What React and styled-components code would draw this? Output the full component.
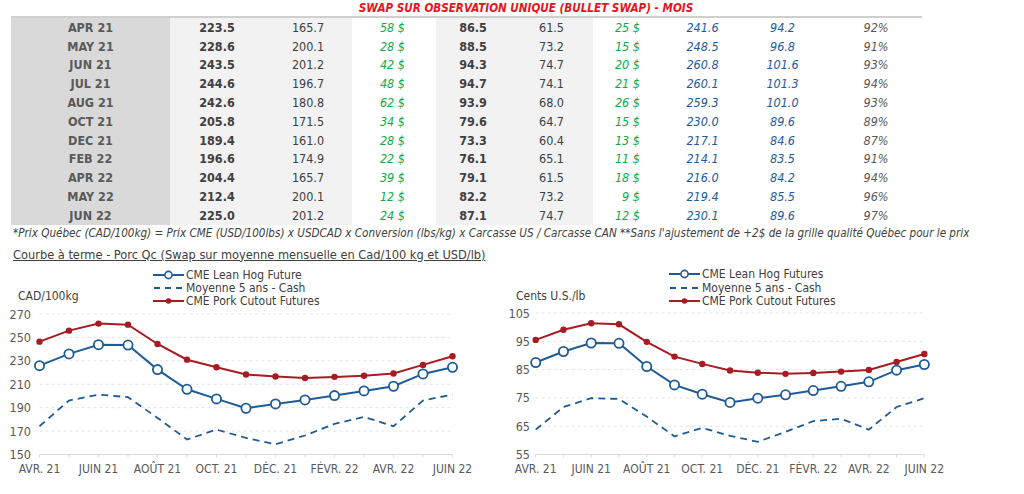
import React from "react";
import styled, { createGlobalStyle } from "styled-components";

const FONT = `"DejaVu Sans Condensed", "DejaVu Sans", sans-serif`;

const GlobalStyle = createGlobalStyle`
  body {
    margin: 0;
    background: #ffffff;
    font-family: ${FONT};
  }
`;

// table data: month, prix Qc, moyenne, ecart, CME, moyenne, ecart, cutout CAD, cutout USD, ratio
const rows = [
  ["APR 21", "223.5", "165.7", "58 $", "86.5", "61.5", "25 $", "241.6", "94.2", "92%"],
  ["MAY 21", "228.6", "200.1", "28 $", "88.5", "73.2", "15 $", "248.5", "96.8", "91%"],
  ["JUN 21", "243.5", "201.2", "42 $", "94.3", "74.7", "20 $", "260.8", "101.6", "93%"],
  ["JUL 21", "244.6", "196.7", "48 $", "94.7", "74.1", "21 $", "260.1", "101.3", "94%"],
  ["AUG 21", "242.6", "180.8", "62 $", "93.9", "68.0", "26 $", "259.3", "101.0", "93%"],
  ["OCT 21", "205.8", "171.5", "34 $", "79.6", "64.7", "15 $", "230.0", "89.6", "89%"],
  ["DEC 21", "189.4", "161.0", "28 $", "73.3", "60.4", "13 $", "217.1", "84.6", "87%"],
  ["FEB 22", "196.6", "174.9", "22 $", "76.1", "65.1", "11 $", "214.1", "83.5", "91%"],
  ["APR 22", "204.4", "165.7", "39 $", "79.1", "61.5", "18 $", "216.0", "84.2", "94%"],
  ["MAY 22", "212.4", "200.1", "12 $", "82.2", "73.2", "9 $", "219.4", "85.5", "96%"],
  ["JUN 22", "225.0", "201.2", "24 $", "87.1", "74.7", "12 $", "230.1", "89.6", "97%"],
];

// how each column looks
const columns = [
  { bg: "#d9d9d9", kind: "month" },
  { bg: "#f2f2f2", kind: "bold" },
  { bg: "#f2f2f2", kind: "plain" },
  { bg: "#ffffff", kind: "green", right: 31 },
  { bg: "#f2f2f2", kind: "bold" },
  { bg: "#f2f2f2", kind: "plain" },
  { bg: "#ffffff", kind: "green", right: 30 },
  { bg: "#ffffff", kind: "blue" },
  { bg: "#ffffff", kind: "blue" },
  { bg: "#ffffff", kind: "pct" },
];

const months = ["AVR. 21", "", "JUIN 21", "", "AOÛT 21", "", "OCT. 21", "", "DÉC. 21", "", "FÉVR. 22", "", "AVR. 22", "", "JUIN 22"];

const leftSeries = {
  hog: [225.9, 235.9, 243.8, 243.5, 222.5, 205.7, 197.5, 189.5, 193.2, 196.6, 200.3, 204.3, 208.3, 218.8, 224.5],
  avg: [174.2, 196.1, 201.2, 198.9, 181.3, 162.8, 171.3, 164.2, 158.8, 166.2, 176.1, 182.1, 174.2, 196.1, 201.2],
  cutout: [246.4, 255.8, 261.8, 260.9, 244.4, 231.0, 224.5, 218.3, 216.6, 215.4, 216.3, 217.2, 219.2, 226.5, 233.9],
};

const rightSeries = {
  hog: [87.5, 91.4, 94.4, 94.3, 86.1, 79.6, 76.3, 73.4, 74.9, 76.1, 77.6, 79.1, 80.7, 84.8, 86.8],
  avg: [63.8, 71.8, 74.9, 74.6, 68.4, 61.4, 64.4, 61.6, 59.5, 63.0, 66.8, 67.6, 63.8, 71.8, 74.9],
  cutout: [95.5, 99.1, 101.4, 101.0, 94.8, 89.6, 87.0, 84.7, 83.9, 83.5, 83.8, 84.3, 84.9, 87.7, 90.5],
};

const BLUE = "#1f5b96";
const RED = "#a61c22";

function LineChart({ width, series, x0, dx, top, bottom, yMax, yMin, step, labelX }) {
  const scale = (bottom - top) / (yMax - yMin);
  const y = (v) => top + (yMax - v) * scale;
  const x = (i) => x0 + i * dx;
  const path = (arr) => arr.map((v, i) => `${i ? "L" : "M"}${x(i).toFixed(1)},${y(v).toFixed(1)}`).join(" ");
  const xEnd = x(14);
  const ticks = [];
  for (let v = yMax; v >= yMin; v -= step) ticks.push(v);

  return (
    <svg width={width} height={176} style={{ display: "block", overflow: "visible" }}>
      {ticks.map((v) => (
        <g key={v}>
          {v === yMin ? (
            <line x1={x0} x2={xEnd} y1={y(v)} y2={y(v)} stroke="#d9d9d9" strokeWidth="1" />
          ) : (
            <line x1={x0} x2={xEnd} y1={y(v)} y2={y(v)} stroke="#e3e3e3" strokeWidth="1" strokeDasharray="3 3" />
          )}
          <text x={labelX} y={y(v) + 4.5} textAnchor="end" fontSize="12.5" fill="#595959" fontFamily={FONT}>
            {v}
          </text>
        </g>
      ))}
      {months.map((m, i) => (
        <g key={i}>
          <line x1={x(i)} x2={x(i)} y1={bottom} y2={bottom + 3} stroke="#d9d9d9" />
          {m && (
            <text x={x(i)} y={bottom + 18} textAnchor="middle" fontSize="12" fill="#595959" fontFamily={FONT}>
              {m}
            </text>
          )}
        </g>
      ))}
      <path d={path(series.avg)} fill="none" stroke={BLUE} strokeWidth="1.8" strokeDasharray="7 5" />
      <path d={path(series.cutout)} fill="none" stroke={RED} strokeWidth="2" />
      {series.cutout.map((v, i) => (
        <circle key={i} cx={x(i)} cy={y(v)} r="3.2" fill={RED} />
      ))}
      <path d={path(series.hog)} fill="none" stroke={BLUE} strokeWidth="2" />
      {series.hog.map((v, i) => (
        <circle key={i} cx={x(i)} cy={y(v)} r="4.6" fill="#fff" stroke={BLUE} strokeWidth="1.8" />
      ))}
    </svg>
  );
}

function Swatch({ type }) {
  return (
    <svg width="31" height="10">
      {type === "hog" && (
        <>
          <line x1="0" x2="31" y1="5" y2="5" stroke={BLUE} strokeWidth="2" />
          <circle cx="15.5" cy="5" r="3.6" fill="#fff" stroke={BLUE} strokeWidth="1.6" />
        </>
      )}
      {type === "avg" && <line x1="1" x2="31" y1="5" y2="5" stroke={BLUE} strokeWidth="1.8" strokeDasharray="6 5" />}
      {type === "cutout" && (
        <>
          <line x1="0" x2="31" y1="5" y2="5" stroke={RED} strokeWidth="2" />
          <circle cx="15.5" cy="5" r="2.8" fill={RED} />
        </>
      )}
    </svg>
  );
}

function ChartPanel({ width, unit, unitLeft, legendLeft, hogLabel, rowHeight, children }) {
  return (
    <Panel $width={width}>
      <ChartHeader>
        <UnitLabel $left={unitLeft} $width={legendLeft}>{unit}</UnitLabel>
        <Legend>
          <LegendItem $h={rowHeight}>
            <Swatch type="hog" />
            <span>{hogLabel}</span>
          </LegendItem>
          <LegendItem $h={rowHeight}>
            <Swatch type="avg" />
            <span>Moyenne 5 ans - Cash</span>
          </LegendItem>
          <LegendItem $h={rowHeight}>
            <Swatch type="cutout" />
            <span>CME Pork Cutout Futures</span>
          </LegendItem>
        </Legend>
      </ChartHeader>
      {children}
    </Panel>
  );
}

export default function App() {
  return (
    <Page>
      <GlobalStyle />
      <Title>SWAP SUR OBSERVATION UNIQUE (BULLET SWAP) - MOIS</Title>
      <Table>
        {rows.map((row, r) =>
          row.map((val, c) => (
            <Cell key={`${r}-${c}`} $bg={columns[c].bg} $kind={columns[c].kind} $right={columns[c].right}>
              {val}
            </Cell>
          ))
        )}
      </Table>
      <Footnote>
        *Prix Québec (CAD/100kg) = Prix CME (USD/100lbs) x USDCAD x Conversion (lbs/kg) x Carcasse US / Carcasse CAN **Sans l'ajustement de +2$ de la grille qualité Québec pour le prix
      </Footnote>
      <Subtitle>Courbe à terme - Porc Qc (Swap sur moyenne mensuelle en Cad/100 kg et USD/lb)</Subtitle>
      <ChartsRow>
        <ChartPanel width={490} unit="CAD/100kg" unitLeft={18} legendLeft={153} hogLabel="CME Lean Hog Future" rowHeight={13}>
          <LineChart width={490} series={leftSeries} x0={39.5} dx={29.5} top={6} bottom={146.5} yMax={270} yMin={150} step={20} labelX={31} />
        </ChartPanel>
        <ChartPanel width={534} unit="Cents U.S./lb" unitLeft={26} legendLeft={179} hogLabel="CME Lean Hog Futures" rowHeight={13.5}>
          <LineChart width={534} series={rightSeries} x0={45.7} dx={27.76} top={5} bottom={146.5} yMax={105} yMin={55} step={10} labelX={40} />
        </ChartPanel>
      </ChartsRow>
    </Page>
  );
}

const Page = styled.div`
  width: 1024px;
  height: 494px;
  overflow: hidden;
  display: flex;
  flex-direction: column;
  color: #404040;
`;

const Title = styled.div`
  height: 16px;
  line-height: 16px;
  padding-left: 28px;
  text-align: center;
  color: #e8141c;
  font-size: 11.6px;
  font-weight: bold;
  font-style: italic;
`;

const Table = styled.div`
  margin-left: 11px;
  width: 911px;
  border-top: 2px solid #cfcfcf;
  display: grid;
  grid-template-columns: 159px 94px 88px 84px 74px 83px 77px 65px 95px 92px;
  grid-auto-rows: 18.8px;
`;

const kindStyles = {
  month: "color: #595959; font-weight: bold;",
  bold: "color: #404040; font-weight: bold;",
  plain: "color: #404040;",
  green: "color: #14a84a; font-style: italic;",
  blue: "color: #1f5b99; font-style: italic;",
  pct: "color: #595959; font-style: italic;",
};

const Cell = styled.div`
  display: flex;
  align-items: center;
  justify-content: ${(p) => (p.$right ? "flex-end" : "center")};
  padding-right: ${(p) => (p.$right ? `${p.$right}px` : "0")};
  background: ${(p) => p.$bg};
  font-size: 12.5px;
  ${(p) => kindStyles[p.$kind]}
`;

const Footnote = styled.div`
  padding-left: 13px;
  height: 16px;
  line-height: 16px;
  font-size: 11.6px;
  font-style: italic;
  color: #404040;
  white-space: nowrap;
`;

const Subtitle = styled.div`
  margin-top: 6px;
  padding-left: 13px;
  height: 16px;
  line-height: 16px;
  font-size: 12.7px;
  color: #404040;
  text-decoration: underline;
  white-space: nowrap;
`;

const ChartsRow = styled.div`
  margin-top: 6px;
  display: flex;
`;

const Panel = styled.div`
  width: ${(p) => p.$width}px;
  display: flex;
  flex-direction: column;
`;

const ChartHeader = styled.div`
  display: flex;
  align-items: flex-end;
  height: 39px;
`;

const UnitLabel = styled.div`
  width: ${(p) => p.$width}px;
  padding-left: ${(p) => p.$left}px;
  box-sizing: border-box;
  margin-bottom: 5px;
  font-size: 12px;
  line-height: 13px;
  color: #404040;
`;

const Legend = styled.div`
  display: flex;
  flex-direction: column;
`;

const LegendItem = styled.div`
  display: flex;
  align-items: center;
  gap: 2px;
  height: ${(p) => p.$h}px;
  font-size: 12px;
  color: #404040;
  white-space: nowrap;
`;
